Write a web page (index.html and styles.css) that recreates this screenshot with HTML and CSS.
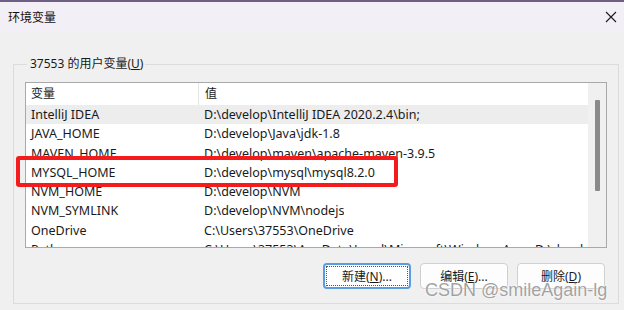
FILE: index.html
```html
<!DOCTYPE html>
<html lang="zh-CN">
<head>
  <meta charset="UTF-8">
  <meta name="viewport" content="width=device-width, initial-scale=1.0">
  <title>环境变量</title>
  <link rel="stylesheet" href="styles.css">
</head>
<body>
  <div class="window">
    <!-- Title bar -->
    <div class="titlebar">
      <span class="title">环境变量</span>
      <svg class="close" width="12" height="12" viewBox="0 0 12 12">
        <path d="M1 1 L11 11 M11 1 L1 11" stroke="#1b1b1b" stroke-width="1.1" fill="none"/>
      </svg>
    </div>

    <!-- Body -->
    <div class="body">
      <fieldset class="group">
        <legend>37553 的用户变量(<u>U</u>)</legend>

        <div class="list">
          <div class="list-view">
            <div class="row head">
              <span class="col-name">变量</span>
              <span class="col-value">值</span>
            </div>
            <div class="row selected">
              <span class="col-name">IntelliJ IDEA</span>
              <span class="col-value">D:\develop\IntelliJ IDEA 2020.2.4\bin;</span>
            </div>
            <div class="row">
              <span class="col-name">JAVA_HOME</span>
              <span class="col-value">D:\develop\Java\jdk-1.8</span>
            </div>
            <div class="row">
              <span class="col-name">MAVEN_HOME</span>
              <span class="col-value">D:\develop\maven\apache-maven-3.9.5</span>
            </div>
            <div class="row">
              <span class="col-name">MYSQL_HOME</span>
              <span class="col-value">D:\develop\mysql\mysql8.2.0</span>
            </div>
            <div class="row">
              <span class="col-name">NVM_HOME</span>
              <span class="col-value">D:\develop\NVM</span>
            </div>
            <div class="row">
              <span class="col-name">NVM_SYMLINK</span>
              <span class="col-value">D:\develop\NVM\nodejs</span>
            </div>
            <div class="row">
              <span class="col-name">OneDrive</span>
              <span class="col-value">C:\Users\37553\OneDrive</span>
            </div>
            <div class="row">
              <span class="col-name">Path</span>
              <span class="col-value">C:\Users\37553\AppData\Local\Microsoft\WindowsApps;D:\develop\</span>
            </div>
          </div>
          <div class="scrollbar">
            <div class="thumb"></div>
          </div>
        </div>

        <div class="buttons">
          <button class="btn focused"><span class="focus-ring">新建(<u>N</u>)...</span></button>
          <button class="btn">编辑(<u>E</u>)...</button>
          <button class="btn">删除(<u>D</u>)</button>
        </div>
      </fieldset>
    </div>

    <!-- Red annotation box -->
    <div class="highlight"></div>

    <!-- Watermark -->
    <div class="watermark">CSDN @smileAgain-lg</div>
  </div>
</body>
</html>
```

FILE: styles.css
```css
body {
  margin: 0;
  padding: 0;
  font-family: "Noto Sans", "Noto Sans CJK SC", sans-serif;
  font-size: 12px;
  color: #1a1a1a;
  background-color: #f0f0f0;
}

.window {
  position: relative;
  width: 624px;
  height: 310px;
  overflow: hidden;
  background-color: #f0f0f0;
}

.titlebar {
  height: 30px;
  border-top: 2px solid #6f5f84;
  background-color: #f3eff7;
  display: flex;
  align-items: center;
  justify-content: space-between;
  padding: 0 7px 0 8px;
}

.title {
  font-size: 12px;
  color: #111;
}

.close {
  display: block;
}

.body {
  padding: 24px 5px 0 13px;
}

.group {
  margin: 0;
  min-width: 0;
  border: 1px solid #dcdcdc;
  padding: 10px 11px 14px 11px;
}

.group legend {
  padding: 0 2px 0 3px;
  margin-left: 2px;
  line-height: 16px;
  color: #1a1a1a;
}

.list {
  display: flex;
  height: 164px;
  border: 1px solid #a9a9a9;
  background-color: #fff;
  font-size: 12.5px;
}

.list-view {
  flex: 1;
  min-width: 0;
  overflow: hidden;
}

.row {
  display: flex;
  height: 19.25px;
  line-height: 19.25px;
  white-space: nowrap;
}

.row.head {
  height: 22px;
  line-height: 22px;
  font-size: 12px;
}

.row.selected {
  background-color: #ededed;
}

.col-name {
  width: 167px;
  padding-left: 5px;
  flex-shrink: 0;
  overflow: hidden;
}

.head .col-name {
  border-right: 1px solid #e5e5e5;
}

.col-value {
  padding-left: 6px;
  overflow: hidden;
}

.scrollbar {
  width: 18px;
  flex-shrink: 0;
  background-color: #f0f0f0;
  display: flex;
  justify-content: center;
  padding-top: 17px;
}

.thumb {
  width: 5px;
  height: 91px;
  margin-left: 1px;
  background-color: #8a8a8a;
  border-radius: 1px;
}

.buttons {
  display: flex;
  justify-content: flex-end;
  gap: 9px;
  margin-top: 15px;
  padding-right: 2px;
}

.btn {
  width: 88px;
  height: 26px;
  font-family: "Noto Sans", "Noto Sans CJK SC", sans-serif;
  font-size: 12px;
  color: #1a1a1a;
  background-color: #fdfdfd;
  border: 1px solid #d0d0d0;
  border-radius: 4px;
  padding: 0;
}

.btn.focused {
  border: 2px solid #5b9be0;
  background-color: #fff;
  padding: 1px;
}

.focus-ring {
  display: flex;
  align-items: center;
  justify-content: center;
  height: 100%;
  box-sizing: border-box;
  border: 1px dotted #555;
}

.highlight {
  position: absolute;
  left: 16px;
  top: 156px;
  width: 374px;
  height: 23px;
  border: 4px solid #f31b1b;
  border-radius: 3px;
}

.watermark {
  position: absolute;
  left: 425px;
  top: 280px;
  font-family: "Liberation Sans", sans-serif;
  font-size: 18px;
  color: rgba(120, 120, 120, 0.7);
  text-shadow: 0 0 2px #fff, 0 0 1px #fff;
  white-space: nowrap;
}
```
